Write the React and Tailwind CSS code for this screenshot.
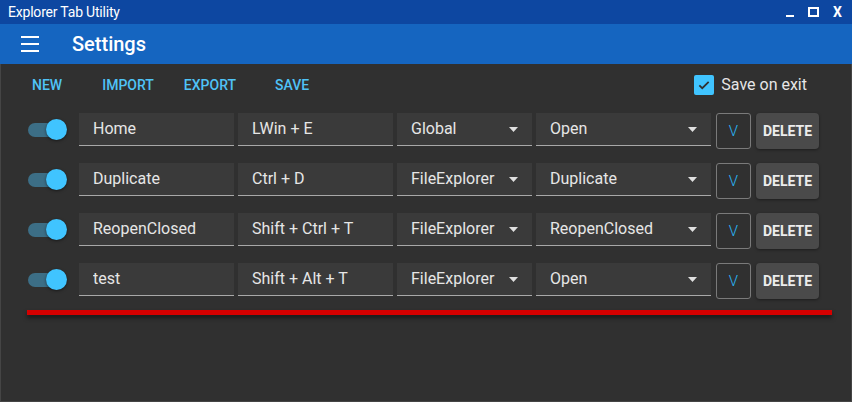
import React from 'react'

const ROWS = [
  { name: 'Home', keys: 'LWin + E', scope: 'Global', action: 'Open' },
  { name: 'Duplicate', keys: 'Ctrl + D', scope: 'FileExplorer', action: 'Duplicate' },
  { name: 'ReopenClosed', keys: 'Shift + Ctrl + T', scope: 'FileExplorer', action: 'ReopenClosed' },
  { name: 'test', keys: 'Shift + Alt + T', scope: 'FileExplorer', action: 'Open' },
]

function Field({ w, children, select }) {
  return (
    <div className={`${w} h-[33px] bg-[#3a3a3a] border-b border-[#a8a8a8] flex items-center pl-[14px] pr-[14px] text-[16px] text-[#e6e6e6]`}>
      <span className="flex-1 truncate">{children}</span>
      {select && (
        <svg width="9" height="5" viewBox="0 0 9 5" className="shrink-0"><path d="M0 0h9L4.5 5z" fill="#e0e0e0" /></svg>
      )}
    </div>
  )
}

function Row({ r }) {
  return (
    <div className="flex items-start h-[36px]">
      <div className="w-[52px] h-[33px] flex items-center relative">
        <div className="ml-[1px] w-[34px] h-[14px] rounded-full bg-[#3c6e86]" />
        <div className="absolute left-[19px] top-[6px] w-[21px] h-[21px] rounded-full bg-[#40c4ff] shadow-[0_1px_3px_rgba(0,0,0,0.5)]" />
      </div>
      <div className="flex gap-[4px]">
        <Field w="w-[155px]">{r.name}</Field>
        <Field w="w-[155px]">{r.keys}</Field>
        <Field w="w-[135px]" select>{r.scope}</Field>
        <Field w="w-[175px]" select>{r.action}</Field>
      </div>
      <div className="ml-[5px] w-[35px] h-[36px] border border-[#7a7a7a] rounded-[3px] flex items-center justify-center text-[#29b6f6] text-[15px] font-light">V</div>
      <div className="ml-[5px] w-[63px] h-[36px] bg-[#4a4a4a] rounded-[4px] flex items-center justify-center text-[#ececec] text-[14px] font-bold shadow-[0_1px_3px_rgba(0,0,0,0.4)]">DELETE</div>
    </div>
  )
}

export default function App() {
  return (
    <div className="w-[852px] h-[402px] flex flex-col bg-[#303030] overflow-hidden" style={{ fontFamily: 'Roboto, "Noto Sans", sans-serif' }}>
      {/* title bar */}
      <div className="h-[24px] bg-[#0d47a1] flex items-center pl-[8px] pr-[10px] text-white text-[14px] shrink-0">
        <span className="flex-1 tracking-[-0.2px]">Explorer Tab Utility</span>
        <div className="flex items-center gap-[14px]">
          <div className="w-[8px] h-[2px] bg-white mt-[8px]" />
          <div className="w-[11px] h-[10px] border-2 border-white" />
          <span className="text-[14px] font-bold leading-none">X</span>
        </div>
      </div>

      {/* app bar */}
      <div className="h-[40px] bg-[#1565c0] flex items-center shrink-0">
        <div className="ml-[21px] w-[18px] flex flex-col gap-[5px]">
          <div className="h-[2px] bg-white" />
          <div className="h-[2px] bg-white" />
          <div className="h-[2px] bg-white" />
        </div>
        <span className="ml-[33px] text-white text-[20px] font-medium">Settings</span>
      </div>

      {/* body */}
      <div className="flex-1 border-x border-b border-[#454545] flex flex-col">
        <div className="h-[42px] flex items-center pl-[31px] pr-[44px] text-[14px] font-medium text-[#4fc3f7]">
          <span>NEW</span>
          <span className="ml-[40px]">IMPORT</span>
          <span className="ml-[30px]">EXPORT</span>
          <span className="ml-[39px]">SAVE</span>
          <div className="flex-1" />
          <div className="w-[20px] h-[20px] bg-[#40c4ff] rounded-[2px] flex items-center justify-center">
            <svg width="14" height="14" viewBox="0 0 24 24"><path d="M4 12.5l5 5L20 6.5" fill="none" stroke="#303030" strokeWidth="3" /></svg>
          </div>
          <span className="ml-[7px] text-[16px] font-normal text-[#e6e6e6]">Save on exit</span>
        </div>

        <div className="mt-[7px] pl-[26px] flex flex-col gap-[14px]">
          {ROWS.map(r => <Row key={r.name} r={r} />)}
        </div>

        <div className="ml-[26px] mt-[11px] w-[805px] h-[5px] bg-[#d50000] shadow-[0_3px_4px_rgba(0,0,0,0.5)]" />
      </div>
    </div>
  )
}
